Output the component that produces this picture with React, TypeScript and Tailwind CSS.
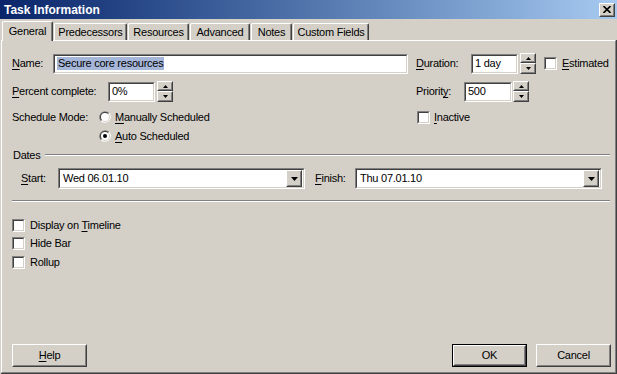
import React from "react";

const Sunken = ({ className = "", inner = "", children }: { className?: string; inner?: string; children?: React.ReactNode }) => (
  <div className={`border border-t-[#808080] border-l-[#808080] border-b-white border-r-white ${className}`}>
    <div className={`h-full w-full border border-t-[#404040] border-l-[#404040] border-b-[#d4d0c8] border-r-[#d4d0c8] bg-white ${inner}`}>{children}</div>
  </div>
);

const Raised = ({ className = "", inner = "", children }: { className?: string; inner?: string; children?: React.ReactNode }) => (
  <div className={`border border-t-white border-l-white border-b-[#404040] border-r-[#404040] bg-[#d4d0c8] ${className}`}>
    <div className={`h-full w-full border border-t-[#d4d0c8] border-l-[#d4d0c8] border-b-[#808080] border-r-[#808080] ${inner}`}>{children}</div>
  </div>
);

const U = ({ children }: { children: React.ReactNode }) => <span className="underline underline-offset-[2px]">{children}</span>;

const Spinner = () => (
  <div className="flex h-[21px] w-[16px] flex-col">
    <Raised className="h-[10px] w-[16px]" inner="flex items-center justify-center">
      <svg width="5" height="3" viewBox="0 0 5 3"><path d="M2.5 0 L5 3 L0 3 Z" fill="#000" /></svg>
    </Raised>
    <Raised className="h-[11px] w-[16px]" inner="flex items-center justify-center">
      <svg width="5" height="3" viewBox="0 0 5 3"><path d="M0 0 L5 0 L2.5 3 Z" fill="#000" /></svg>
    </Raised>
  </div>
);

const Check = () => <Sunken className="h-[13px] w-[13px] shrink-0" />;

const Radio = ({ checked = false }: { checked?: boolean }) => (
  <svg width="12" height="12" viewBox="0 0 12 12" className="shrink-0">
    <path d="M10.24 1.76 A6 6 0 0 0 1.76 10.24 Z" fill="#808080" />
    <path d="M10.24 1.76 A6 6 0 0 1 1.76 10.24 Z" fill="#ffffff" />
    <path d="M9.54 2.46 A5 5 0 0 0 2.46 9.54 Z" fill="#404040" />
    <path d="M9.54 2.46 A5 5 0 0 1 2.46 9.54 Z" fill="#d4d0c8" />
    <circle cx="6" cy="6" r="4" fill="#ffffff" />
    {checked && <circle cx="6" cy="6" r="2" fill="#000" />}
  </svg>
);

const Combo = ({ value }: { value: string }) => (
  <Sunken className="h-[21px] w-[247px]" inner="flex items-center pl-[3px] pr-[1px]">
    <span className="flex-1">{value}</span>
    <Raised className="h-[17px] w-[16px]" inner="flex items-center justify-center">
      <svg width="7" height="4" viewBox="0 0 7 4"><path d="M0 0 L7 0 L3.5 4 Z" fill="#000" /></svg>
    </Raised>
  </Sunken>
);

const Tab = ({ label, w }: { label: string; w: number }) => (
  <div
    className="ml-[1px] flex h-[17px] items-center justify-center rounded-t-[2px] border-l border-t border-r border-l-white border-t-white border-r-[#404040] shadow-[inset_-1px_0_0_#808080]"
    style={{ width: w }}
  >
    {label}
  </div>
);

const Line = ({ className = "" }: { className?: string }) => (
  <div className={`h-[2px] border-t border-b border-t-[#808080] border-b-white ${className}`} />
);

export default function App() {
  return (
    <div className="flex h-[374px] w-[617px] flex-col overflow-hidden bg-[#d4d0c8] font-['Liberation_Sans',Arial,sans-serif] text-[11px] leading-none tracking-[-0.25px] text-black">
      {/* title bar */}
      <div className="flex h-[19px] shrink-0 items-center bg-gradient-to-r from-[#0a246a] to-[#a6caf0] pl-[4px] pr-[2px]">
        <span className="flex-1 text-[12px] font-bold tracking-normal text-white">Task Information</span>
        <Raised className="h-[14px] w-[16px]" inner="flex items-center justify-center">
          <svg width="8" height="7" viewBox="0 0 8 7">
            <path d="M0.5 0 L7.5 7 M7.5 0 L0.5 7" stroke="#000" strokeWidth="1.6" />
          </svg>
        </Raised>
      </div>

      {/* tabs */}
      <div className="relative z-10 flex h-[21px] shrink-0 items-end pl-[2px]">
        <div className="-mb-[1px] flex h-[20px] w-[51px] items-start justify-center rounded-t-[2px] border-l border-t border-r border-l-white border-t-white border-r-[#404040] bg-[#d4d0c8] pt-[4px] shadow-[inset_-1px_0_0_#808080]">
          General
        </div>
        <Tab label="Predecessors" w={73} />
        <Tab label="Resources" w={61} />
        <Tab label="Advanced" w={60} />
        <Tab label="Notes" w={41} />
        <Tab label="Custom Fields" w={76} />
      </div>

      {/* panel */}
      <div className="ml-[1px] flex flex-1 flex-col border-r border-b border-r-[#404040] border-b-[#404040]">
        <div className="flex flex-1 flex-col border border-l-white border-t-white border-r-[#808080] border-b-[#808080] pb-[5px] pl-[10px]">
          {/* row 1 */}
          <div className="mt-[12px] flex h-[21px] items-center">
            <div className="flex w-[404px] items-center">
              <span className="w-[41px]"><U>N</U>ame:</span>
              <Sunken className="h-[20px] w-[355px]" inner="flex items-center pl-[2px]">
                <span className="bg-[#a6b6d8] px-[1px] py-[1px]">Secure core resources</span>
              </Sunken>
            </div>
            <span className="w-[55px]"><U>D</U>uration:</span>
            <Sunken className="h-[20px] w-[47px]" inner="flex items-center pl-[2px]">1 day</Sunken>
            <div className="ml-[2px]"><Spinner /></div>
            <div className="ml-[8px]"><Check /></div>
            <span className="ml-[5px]"><U>E</U>stimated</span>
          </div>

          {/* row 2 */}
          <div className="mt-[7px] flex h-[21px] items-center">
            <div className="flex w-[404px] items-center">
              <span className="w-[96px]"><U>P</U>ercent complete:</span>
              <Sunken className="h-[20px] w-[47px]" inner="flex items-center pl-[2px]">0%</Sunken>
              <div className="ml-[2px]"><Spinner /></div>
            </div>
            <span className="w-[48px]">Priorit<U>y</U>:</span>
            <Sunken className="h-[20px] w-[48px]" inner="flex items-center pl-[2px]">500</Sunken>
            <div className="ml-[1px]"><Spinner /></div>
          </div>

          {/* row 3 */}
          <div className="mt-[8px] flex h-[14px] items-center">
            <div className="flex w-[404px] items-center">
              <span className="w-[87px]">Schedule Mode:</span>
              <Radio />
              <span className="ml-[4px]"><U>M</U>anually Scheduled</span>
            </div>
            <div className="ml-[1px]"><Check /></div>
            <span className="ml-[4px]"><U>I</U>nactive</span>
          </div>

          {/* row 4 */}
          <div className="mt-[5px] flex h-[14px] items-center pl-[87px]">
            <Radio checked />
            <span className="ml-[4px]"><U>A</U>uto Scheduled</span>
          </div>

          {/* dates group */}
          <div className="mt-[5px] flex h-[14px] w-[598px] items-center">
            <span className="ml-[1px]">Dates</span>
            <Line className="ml-[4px] flex-1" />
          </div>

          <div className="mt-[6px] flex h-[21px] items-center pl-[9px]">
            <span className="w-[37px]"><U>S</U>tart:</span>
            <Combo value="Wed 06.01.10" />
            <span className="ml-[10px] w-[40px]"><U>F</U>inish:</span>
            <Combo value="Thu 07.01.10" />
          </div>

          <Line className="mt-[11px] w-[598px]" />

          {/* checkboxes */}
          <div className="mt-[17px] flex h-[13px] items-center">
            <Check />
            <span className="ml-[5px]">Display on <U>T</U>imeline</span>
          </div>
          <div className="mt-[5px] flex h-[13px] items-center">
            <Check />
            <span className="ml-[5px]">Hide Bar</span>
          </div>
          <div className="mt-[6px] flex h-[13px] items-center">
            <Check />
            <span className="ml-[5px]">Rollup</span>
          </div>

          <div className="flex-1" />

          {/* buttons */}
          <div className="flex h-[23px] w-[599px] items-center">
            <Raised className="h-[23px] w-[75px]" inner="flex items-center justify-center">
              <span><U>H</U>elp</span>
            </Raised>
            <div className="flex-1" />
            <div className="h-[23px] w-[75px] border border-black">
              <Raised className="h-full w-full" inner="flex items-center justify-center">OK</Raised>
            </div>
            <Raised className="ml-[9px] h-[23px] w-[75px]" inner="flex items-center justify-center">Cancel</Raised>
          </div>
        </div>
      </div>
    </div>
  );
}
